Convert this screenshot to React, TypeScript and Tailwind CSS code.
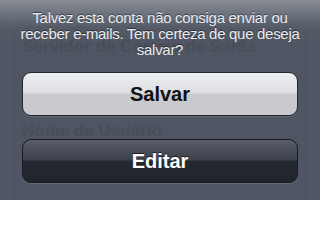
import React from 'react';

const font = { fontFamily: '"Liberation Sans", Arial, sans-serif' };

export default function App() {
  return (
    <div className="relative w-[320px] h-[200px] overflow-hidden bg-[#4f5562]" style={font}>
      {/* dimmed settings table behind the sheet */}
      <div className="absolute inset-0 mx-[9px] border-x border-[#565c69]">
        <div className="px-[12px] pt-[34px] text-[17px] font-bold text-[#484e5b]">Servidor de Correio de Saída</div>
        <div className="px-[12px] pt-[58px] text-[17px] font-bold text-[#484e5b]">Nome de Usuário</div>
      </div>

      {/* action sheet */}
      <div className="relative flex flex-col h-full bg-gradient-to-b from-[#8e939b]/90 via-[#5a606b]/40 via-[14%] to-transparent to-[22%]">
        <p className="mx-[14px] mt-[10px] text-center text-[15px] leading-[16px] tracking-[-0.3px] text-[#e9ecf0] [text-shadow:0_-1px_0_rgba(0,0,0,0.45)]">
          Talvez esta conta não consiga enviar ou receber e-mails. Tem certeza de que deseja salvar?
        </p>

        <button className="mx-[22px] mt-[14px] h-[44px] rounded-[9px] border-[1.5px] border-[#23272f] bg-[linear-gradient(to_bottom,#eeeff1_0%,#dcdee1_48%,#c7c9cd_50%,#c9cbcf_100%)] text-[20px] font-bold text-[#111] shadow-[0_1px_0_rgba(255,255,255,0.12)]">
          Salvar
        </button>

        <button className="mx-[22px] mt-[23px] h-[44px] rounded-[9px] border-[1.5px] border-[#171a20] bg-[linear-gradient(to_bottom,#5a5f6a_0%,#3a3f4a_48%,#252932_50%,#1f232b_100%)] text-[20px] font-bold text-white shadow-[0_1px_0_rgba(255,255,255,0.12)] [text-shadow:0_-1px_0_rgba(0,0,0,0.6)]">
          Editar
        </button>
      </div>
    </div>
  );
}
